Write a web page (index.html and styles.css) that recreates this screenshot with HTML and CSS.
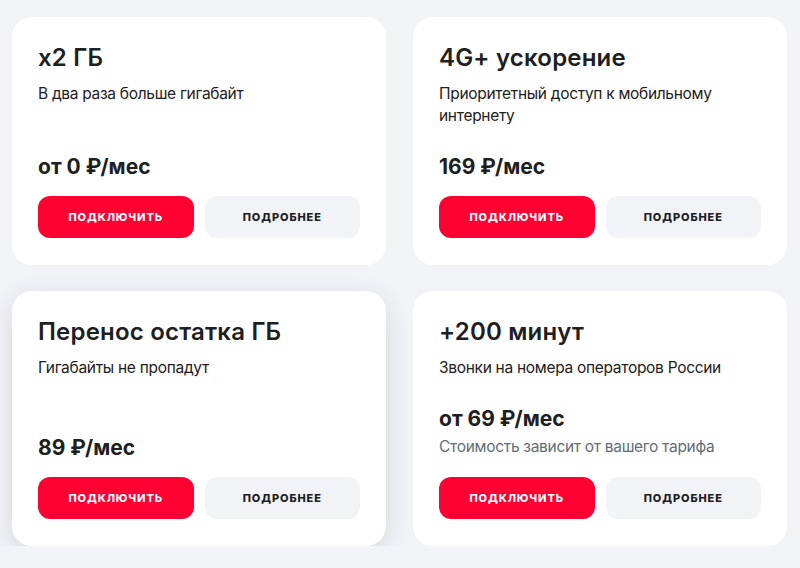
FILE: index.html
```html
<!DOCTYPE html>
<html lang="ru">
<head>
<meta charset="utf-8">
<link rel="stylesheet" href="styles.css">
</head>
<body>
<div class="grid">
  <div class="card">
    <div class="title">x2 ГБ</div>
    <div class="desc">В два раза больше гигабайт</div>
    <div class="price">от 0 ₽/мес</div>
    <div class="actions">
      <button class="btn btn-primary">ПОДКЛЮЧИТЬ</button>
      <button class="btn btn-secondary">ПОДРОБНЕЕ</button>
    </div>
  </div>
  <div class="card">
    <div class="title">4G+ ускорение</div>
    <div class="desc">Приоритетный доступ к мобильному интернету</div>
    <div class="price">169 ₽/мес</div>
    <div class="actions">
      <button class="btn btn-primary">ПОДКЛЮЧИТЬ</button>
      <button class="btn btn-secondary">ПОДРОБНЕЕ</button>
    </div>
  </div>
  <div class="card card-hover">
    <div class="title">Перенос остатка ГБ</div>
    <div class="desc">Гигабайты не пропадут</div>
    <div class="price">89 ₽/мес</div>
    <div class="actions">
      <button class="btn btn-primary">ПОДКЛЮЧИТЬ</button>
      <button class="btn btn-secondary">ПОДРОБНЕЕ</button>
    </div>
  </div>
  <div class="card">
    <div class="title">+200 минут</div>
    <div class="desc">Звонки на номера операторов России</div>
    <div class="price">от 69 ₽/мес</div>
    <div class="note">Стоимость зависит от вашего тарифа</div>
    <div class="actions">
      <button class="btn btn-primary">ПОДКЛЮЧИТЬ</button>
      <button class="btn btn-secondary">ПОДРОБНЕЕ</button>
    </div>
  </div>
</div>
</body>
</html>
```
FILE: styles.css
```css
html, body {
  margin: 0;
  padding: 0;
  background: #f2f3f7;
}
body {
  font-family: Inter, "Noto Sans", sans-serif;
  color: #1d2023;
  padding: 17px 13px 0 12px;
}
.grid {
  display: grid;
  grid-template-columns: 1fr 1fr;
  column-gap: 27px;
  row-gap: 26px;
}
.card {
  background: #ffffff;
  border-radius: 20px;
  padding: 25px 26px 27px;
  display: flex;
  flex-direction: column;
}
.card-hover {
  box-shadow: 0 6px 24px rgba(40, 50, 80, 0.14);
}
.title {
  font-size: 24px;
  line-height: 32px;
  font-weight: 600;
  letter-spacing: 0.2px;
}
.desc {
  margin-top: 9px;
  font-size: 15.5px;
  line-height: 22px;
  font-weight: 400;
  letter-spacing: -0.3px;
}
.price {
  margin-top: auto;
  padding-top: 26px;
  font-size: 21px;
  line-height: 28px;
  font-weight: 700;
}
.note {
  margin-top: 3px;
  margin-bottom: 4px;
  font-size: 15.5px;
  line-height: 22px;
  letter-spacing: -0.3px;
  color: #626c77;
}
.actions {
  margin-top: 15px;
  display: grid;
  grid-template-columns: 1fr 1fr;
  gap: 11px;
}
.btn {
  height: 42px;
  border: none;
  border-radius: 12px;
  font-family: Inter, "Noto Sans", sans-serif;
  font-size: 11px;
  font-weight: 800;
  letter-spacing: 0.9px;
  padding: 0;
}
.btn-primary {
  background: #ff0032;
  color: #ffffff;
}
.btn-secondary {
  background: #f2f3f7;
  color: #1d2023;
}
```
